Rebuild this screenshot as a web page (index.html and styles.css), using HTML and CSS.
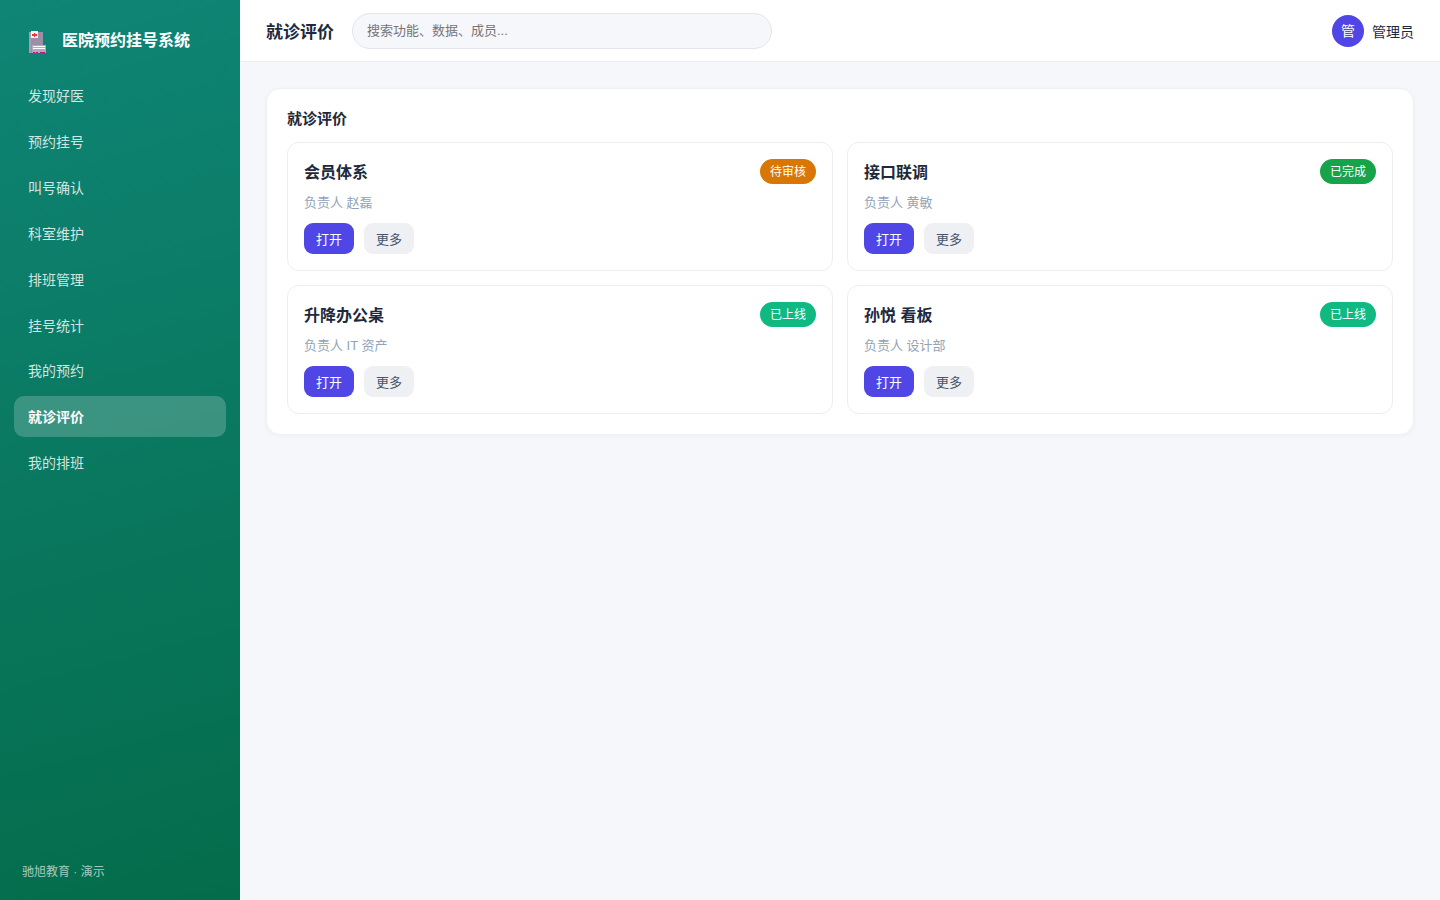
FILE: index.html
```html
<!DOCTYPE html>
<html lang="zh-CN">
  <head>
    <meta charset="UTF-8" />
    <meta name="viewport" content="width=device-width, initial-scale=1.0" />
    <title>就诊评价</title>
    <link rel="stylesheet" href="styles.css">
  </head>

  <body>
    <div class="app">
      <aside class="sidebar">
        <div class="brand">
          <svg class="brand-icon" viewBox="0 0 17 22" shape-rendering="crispEdges">
            <rect x="0" y="1" width="14" height="21" fill="#9b8fa6" />
            <rect x="0" y="1" width="2" height="21" fill="#a99db3" />
            <rect x="2" y="0" width="7" height="7" fill="#f1f1f6" />
            <path d="M5 2h1v1h2v2h-2v1h-1v-1h-2v-2h2z" fill="#f8312f" />
            <rect x="3" y="14" width="14" height="8" fill="#b3a8bd" />
            <rect x="4" y="15" width="12" height="1" fill="#fff" />
            <rect x="4" y="17" width="12" height="1" fill="#fff" />
            <path d="M4 21h2v1h-2zM7 21h2v1h-2zM11 21h5v1h-5z" fill="#c3128d" />
          </svg>
          <span>医院预约挂号系统</span>
        </div>
        <nav class="menu">
          <a class="menu-item">发现好医</a>
          <a class="menu-item">预约挂号</a>
          <a class="menu-item">叫号确认</a>
          <a class="menu-item">科室维护</a>
          <a class="menu-item">排班管理</a>
          <a class="menu-item">挂号统计</a>
          <a class="menu-item">我的预约</a>
          <a class="menu-item active">就诊评价</a>
          <a class="menu-item">我的排班</a>
        </nav>
        <div class="side-foot">驰旭教育 · 演示</div>
      </aside>

      <div class="main">
        <header class="topbar">
          <h1 class="page-title">就诊评价</h1>
          <input class="search" type="text" placeholder="搜索功能、数据、成员..." />
          <div class="user">
            <span class="avatar">管</span>
            <span>管理员</span>
          </div>
        </header>

        <main class="content">
          <section class="panel">
            <h2 class="panel-title">就诊评价</h2>
            <div class="grid">
              <div class="card">
                <div class="card-head">
                  <h3>会员体系</h3>
                  <span class="tag tag-wait">待审核</span>
                </div>
                <p class="owner">负责人 赵磊</p>
                <div class="actions">
                  <button class="btn btn-primary">打开</button>
                  <button class="btn">更多</button>
                </div>
              </div>
              <div class="card">
                <div class="card-head">
                  <h3>接口联调</h3>
                  <span class="tag tag-done">已完成</span>
                </div>
                <p class="owner">负责人 黄敏</p>
                <div class="actions">
                  <button class="btn btn-primary">打开</button>
                  <button class="btn">更多</button>
                </div>
              </div>
              <div class="card">
                <div class="card-head">
                  <h3>升降办公桌</h3>
                  <span class="tag tag-online">已上线</span>
                </div>
                <p class="owner">负责人 IT 资产</p>
                <div class="actions">
                  <button class="btn btn-primary">打开</button>
                  <button class="btn">更多</button>
                </div>
              </div>
              <div class="card">
                <div class="card-head">
                  <h3>孙悦 看板</h3>
                  <span class="tag tag-online">已上线</span>
                </div>
                <p class="owner">负责人 设计部</p>
                <div class="actions">
                  <button class="btn btn-primary">打开</button>
                  <button class="btn">更多</button>
                </div>
              </div>
            </div>
          </section>
        </main>
      </div>
    </div>
  </body>
</html>
```
FILE: styles.css
```css
* {
  box-sizing: border-box;
  margin: 0;
  padding: 0;
}

body {
  font-family: "Liberation Sans", "Noto Sans CJK SC", sans-serif;
  font-size: 14px;
  color: #1e293b;
  background: #f5f7fb;
}

.app {
  display: flex;
  height: 100vh;
}

/* Sidebar */
.sidebar {
  width: 240px;
  flex-shrink: 0;
  display: flex;
  flex-direction: column;
  padding: 22px 14px 18px;
  background: linear-gradient(165deg, #0f8576, #046c4a);
  color: #fff;
}

.brand {
  display: flex;
  align-items: center;
  gap: 16px;
  height: 36px;
  padding-left: 15px;
  margin-bottom: 17.4px;
  font-size: 16px;
  font-weight: 700;
  line-height: 34px;
}

.brand span {
  padding-top: 2px;
}

.brand-icon {
  width: 17px;
  height: 22px;
  margin-top: 4px;
}

.menu {
  display: flex;
  flex-direction: column;
  gap: 4.85px;
}

.menu-item {
  height: 41px;
  padding: 1px 14px 0;
  line-height: 41px;
  border-radius: 10px;
  color: rgba(255, 255, 255, 0.82);
}

.menu-item.active {
  background: rgba(255, 255, 255, 0.2);
  color: #fff;
  font-weight: 700;
}

.side-foot {
  margin-top: auto;
  padding-left: 8px;
  font-size: 12px;
  line-height: 20px;
  color: rgba(255, 255, 255, 0.65);
}

/* Top bar */
.main {
  flex: 1;
}

.topbar {
  display: flex;
  align-items: center;
  gap: 18px;
  height: 62px;
  padding: 0 26px;
  background: #fff;
  border-bottom: 1px solid #eceef2;
}

.page-title {
  font-size: 17px;
}

.search {
  width: 420px;
  height: 36px;
  padding: 0 14px;
  border: 1px solid #e2e5ee;
  border-radius: 18px;
  background: #f5f7fb;
  font: inherit;
  font-size: 13px;
}

.search::placeholder {
  color: #757575;
}

.user {
  display: flex;
  align-items: center;
  gap: 8px;
  margin-left: auto;
}

.avatar {
  width: 32px;
  height: 32px;
  border-radius: 50%;
  background: #4f46e5;
  color: #fff;
  font-size: 14px;
  line-height: 32px;
  text-align: center;
}

/* Content */
.content {
  padding: 26px;
}

.panel {
  padding: 20px;
  background: #fff;
  border: 1px solid #f0f1f5;
  border-radius: 14px;
  box-shadow: 0 1px 4px rgba(15, 23, 42, 0.04);
}

.panel-title {
  margin-bottom: 13px;
  font-size: 15px;
  line-height: 20px;
}

.grid {
  display: grid;
  grid-template-columns: 1fr 1fr;
  gap: 14px;
}

.card {
  height: 129px;
  padding: 16px;
  border: 1px solid #eceef2;
  border-radius: 12px;
}

.card-head {
  display: flex;
  justify-content: space-between;
  align-items: center;
  height: 25px;
}

.card-head h3 {
  padding-top: 2px;
  font-size: 16px;
  line-height: 25px;
}

.tag {
  padding: 1px 10px 0;
  border-radius: 13px;
  color: #fff;
  font-size: 12px;
  line-height: 24px;
}

.tag-wait {
  background: #d97706;
}

.tag-done {
  background: #16a34a;
}

.tag-online {
  background: #10b981;
}

.owner {
  margin: 9px 0 10px;
  font-size: 13px;
  line-height: 20px;
  color: #94a3b8;
}

.actions {
  display: flex;
  gap: 10px;
}

.btn {
  height: 31px;
  padding: 0 12px 1px;
  border: none;
  border-radius: 9px;
  background: #eef0f4;
  color: #475569;
  font: inherit;
  font-size: 13px;
}

.btn-primary {
  background: #4f46e5;
  color: #fff;
}
```
